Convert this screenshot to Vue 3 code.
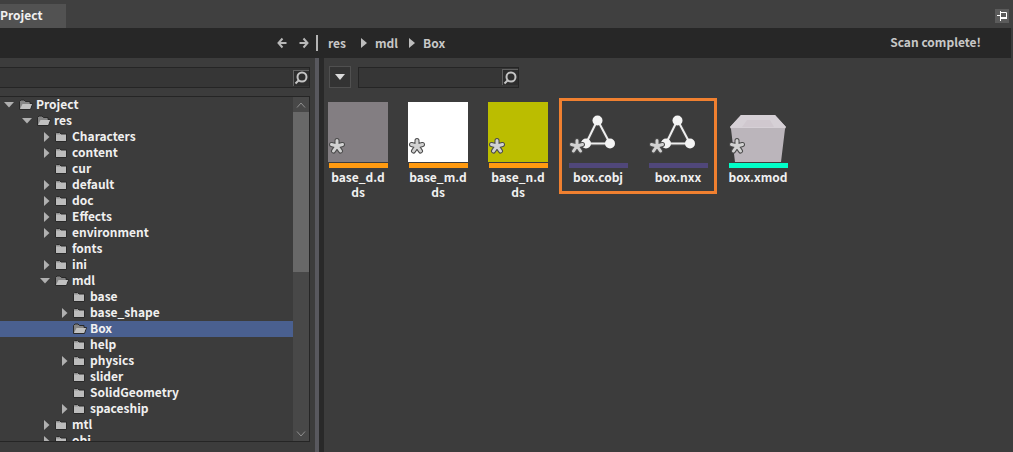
<script setup>
import { ref } from 'vue'

const rows = [
  { name: 'Project', level: 0, state: 'open' },
  { name: 'res', level: 1, state: 'open' },
  { name: 'Characters', level: 2, state: 'closed' },
  { name: 'content', level: 2, state: 'closed' },
  { name: 'cur', level: 2, state: 'leaf' },
  { name: 'default', level: 2, state: 'closed' },
  { name: 'doc', level: 2, state: 'closed' },
  { name: 'Effects', level: 2, state: 'closed' },
  { name: 'environment', level: 2, state: 'closed' },
  { name: 'fonts', level: 2, state: 'leaf' },
  { name: 'ini', level: 2, state: 'closed' },
  { name: 'mdl', level: 2, state: 'open' },
  { name: 'base', level: 3, state: 'leaf' },
  { name: 'base_shape', level: 3, state: 'closed' },
  { name: 'Box', level: 3, state: 'leaf' },
  { name: 'help', level: 3, state: 'leaf' },
  { name: 'physics', level: 3, state: 'closed' },
  { name: 'slider', level: 3, state: 'leaf' },
  { name: 'SolidGeometry', level: 3, state: 'leaf' },
  { name: 'spaceship', level: 3, state: 'closed' },
  { name: 'mtl', level: 2, state: 'closed' },
  { name: 'obj', level: 2, state: 'closed' },
]

const textures = [
  { name: 'base_d.dds', kind: 'texture', swatch: 'grey' },
  { name: 'base_m.dds', kind: 'texture', swatch: 'white' },
  { name: 'base_n.dds', kind: 'texture', swatch: 'olive' },
]
const meshes = [
  { name: 'box.cobj', kind: 'mesh' },
  { name: 'box.nxx', kind: 'mesh' },
]
const models = [{ name: 'box.xmod', kind: 'model' }]
const groups = [
  { id: 'textures', marked: false, files: textures },
  { id: 'meshes', marked: true, files: meshes },
  { id: 'models', marked: false, files: models },
]

const crumbs = ['res', 'mdl', 'Box']
const selected = ref('Box')
const treeQuery = ref('')
const fileQuery = ref('')
</script>

<template>
  <div class="app">
    <header class="tabs">
      <button class="tab" type="button">Project</button>
      <button class="pin" type="button" aria-label="Pin panel">
        <svg width="14" height="14" viewBox="0 0 14 14">
          <path d="M2 6.5H5M5.5 2V12M5 3.5H11.5V8.5" fill="none" stroke="#fff" />
          <path d="M5 9H12" stroke="#fff" stroke-width="2" />
        </svg>
      </button>
    </header>

    <nav class="toolbar">
      <div class="history">
        <button type="button" aria-label="Back">
          <svg width="10" height="12" viewBox="0 0 10 12"><path d="M5.5 1.5L1.5 6L5.5 10.5M1.5 6H9.5" /></svg>
        </button>
        <button type="button" aria-label="Forward">
          <svg width="10" height="12" viewBox="0 0 10 12"><path d="M4.5 1.5L8.5 6L4.5 10.5M8.5 6H0.5" /></svg>
        </button>
        <span class="bar"></span>
      </div>
      <ol class="crumbs">
        <li v-for="(c, i) in crumbs" :key="c">
          <svg v-if="i" width="6" height="10" viewBox="0 0 6 10"><path d="M0 0L6 5L0 10Z" fill="#bdbdbd" /></svg>
          <a href="#">{{ c }}</a>
        </li>
      </ol>
      <span class="status">Scan complete!</span>
    </nav>

    <main class="panes">
      <aside class="side">
        <div class="search">
          <input v-model="treeQuery" type="text" aria-label="Search folders" />
          <button type="button" aria-label="Search folders now">
            <svg width="16" height="16" viewBox="0 0 16 16">
              <circle cx="9" cy="7" r="4.5" fill="none" stroke="#c4c4c4" stroke-width="2" />
              <path d="M6 10L2.5 13.5" stroke="#c4c4c4" stroke-width="2" />
            </svg>
          </button>
        </div>
        <div class="tree">
          <ul class="rows">
            <li v-for="r in rows" :key="r.name">
              <button
                type="button"
                class="row"
                :class="['level-' + r.level, { selected: selected === r.name }]"
                @click="selected = r.name"
              >
                <span class="twist" :class="r.state">
                  <svg v-if="r.state === 'open'" width="10" height="6" viewBox="0 0 10 6"><path d="M0 0H10L5 5.5Z" fill="#b0b0b0" /></svg>
                  <svg v-else-if="r.state === 'closed'" width="6" height="10" viewBox="0 0 6 10"><path d="M0 0L5.5 5L0 10Z" fill="#b0b0b0" /></svg>
                </span>
                <svg class="folder" width="14" height="12" viewBox="0 0 14 12">
                  <template v-if="r.state === 'open' || r.name === 'Box'">
                    <path d="M0.5 10.5V2.5L2 1H5L6.5 2.5H11V4.5H13.5L11.5 10.5Z" fill="#858585" stroke="#292929" />
                    <path d="M3.5 5H13L11 10H1Z" fill="#c0c0c0" />
                  </template>
                  <template v-else>
                    <path d="M0.5 10.5V3L1.5 1.5H4.5L6 3H11.5V10.5Z" fill="#bcbcbc" stroke="#292929" />
                    <path d="M1 3.5L2 2H4.5L5.5 3.5Z" fill="#8d8d8d" />
                  </template>
                </svg>
                <span class="name">{{ r.name }}</span>
              </button>
            </li>
          </ul>
          <div class="scroll">
            <button type="button" aria-label="Scroll up">
              <svg width="10" height="6" viewBox="0 0 10 6"><path d="M1 5.5L5 1L9 5.5" /></svg>
            </button>
            <div class="track"><div class="thumb"></div></div>
            <button type="button" aria-label="Scroll down">
              <svg width="10" height="6" viewBox="0 0 10 6"><path d="M1 0.5L5 5L9 0.5" /></svg>
            </button>
          </div>
        </div>
      </aside>
      <div class="splitter"></div>

      <section class="content">
        <div class="filters">
          <button class="menu" type="button" aria-label="Filter menu">
            <svg width="10" height="6" viewBox="0 0 10 6"><path d="M0 0H10L5 6Z" fill="#dadada" /></svg>
          </button>
          <div class="search small">
            <input v-model="fileQuery" type="text" aria-label="Search files" />
            <button type="button" aria-label="Search files now">
              <svg width="16" height="16" viewBox="0 0 16 16">
                <circle cx="9" cy="7" r="4.5" fill="none" stroke="#c4c4c4" stroke-width="2" />
                <path d="M6 10L2.5 13.5" stroke="#c4c4c4" stroke-width="2" />
              </svg>
            </button>
          </div>
        </div>

        <div class="files">
          <div v-for="g in groups" :key="g.id" class="group" :class="{ marked: g.marked }">
            <figure v-for="f in g.files" :key="f.name" class="file" :class="f.kind">
              <div class="thumbnail" :class="f.swatch">
                <svg v-if="f.kind === 'mesh'" width="60" height="60" viewBox="0 0 60 60">
                  <path d="M29.5 18L18 42H42Z" fill="none" stroke="#474747" stroke-width="4" />
                  <path d="M29.5 18L18 41.5H42Z" fill="none" stroke="#eeeeee" stroke-width="2" />
                  <g fill="#f4f4f4"><circle cx="29.5" cy="18.5" r="5" /><circle cx="18" cy="41.5" r="5" /><circle cx="42" cy="41.5" r="5" /></g>
                </svg>
                <svg v-if="f.kind === 'model'" width="60" height="60" viewBox="0 0 60 60">
                  <path d="M13 13H47L58 25L57 27L53 60H7L3 27L2 25Z" fill="#bbb5bb" />
                  <path d="M13 13H47L58 25L57 26H3L2 25Z" fill="#d6d0d6" />
                  <path d="M19 18H42L46 25H14Z" fill="#d0c8cf" />
                </svg>
                <svg class="star" width="18" height="18" viewBox="0 0 18 18">
                  <g v-for="pass in 2" :key="pass" :stroke="pass === 1 ? '#4c4c4c' : '#d2d2d2'" :stroke-width="pass === 1 ? 5 : 3" stroke-linecap="round">
                    <path d="M9 9V3.5M9 9L14.5 7.5M9 9L12.5 14M9 9L5.5 14M9 9L3.5 7.5" />
                  </g>
                </svg>
              </div>
              <div class="stripe"></div>
              <figcaption>{{ f.name }}</figcaption>
            </figure>
          </div>
        </div>
      </section>
    </main>
  </div>
</template>

<style>
body { margin: 0; background: #3c3c3c; }
</style>

<style scoped>
* { box-sizing: border-box; }
.app {
  height: 100vh;
  display: flex;
  flex-direction: column;
  overflow: hidden;
  background: #3c3c3c;
  color: #f0f0f0;
  font: 700 12px/16px "Noto Sans CJK SC", "Noto Sans", sans-serif;
}
button, input { margin: 0; padding: 0; border: 0; background: none; color: inherit; font: inherit; }
svg { display: block; flex: none; }
.tabs {
  flex: none;
  height: 28px;
  display: flex;
  justify-content: space-between;
  background: #404040;
}
.tab { width: 66px; height: 24px; margin-top: 4px; padding-bottom: 2px; background: #525252; text-align: left; }
.pin { width: 14px; height: 14px; margin: 9px 4px 0 0; background: #5b5b5b; }
.toolbar {
  flex: none;
  height: 30px;
  margin-right: 2px;
  display: flex;
  align-items: center;
  background: #272727;
  color: #c8c8c8;
}
.history { width: 328px; display: flex; align-items: center; justify-content: flex-end; gap: 12px; padding-right: 10px; }
.history path { fill: none; stroke: #b8b8b8; stroke-width: 2; }
.bar { width: 2px; height: 16px; margin-left: -5px; background: #b4b4b4; }
.crumbs { display: flex; margin: 0; padding: 0; list-style: none; gap: 11px; }
.crumbs li { display: flex; align-items: center; gap: 8px; }
.crumbs a { min-width: 22px; color: inherit; text-decoration: none; }
.status { margin-left: auto; margin-right: 30px; padding-bottom: 2px; }
.panes { flex: 1; min-height: 0; display: flex; }
.side { flex: none; width: 315px; padding: 9px 5px 10px 0; display: flex; flex-direction: column; gap: 8px; }
.splitter { flex: none; width: 9px; background: #292929; border-left: 4px solid #58585e; }
.search {
  flex: none;
  height: 21px;
  display: flex;
  align-items: center;
  border: 1px solid #252525;
  background: #363636;
}
.side .search, .tree { border-left: 0; }
.search input { flex: 1; min-width: 0; height: 100%; outline: none; }
.search button { width: 16px; height: 16px; background: #2d2d2d; border-left: 1px solid #626262; border-top: 1px solid #626262; }
.search button svg { margin: -1px; }
.tree { flex: 1; min-height: 0; display: flex; border: 1px solid #252525; border-left: 0; }
.rows { flex: 1; min-width: 0; margin: 0; padding: 0; list-style: none; overflow: hidden; }
.row { width: 100%; height: 16px; display: flex; align-items: center; text-align: left; }
.level-0 { padding-left: 4px; }
.level-1 { padding-left: 22px; }
.level-2 { padding-left: 40px; }
.level-3 { padding-left: 58px; }
.row.selected { background: #4a6090; }
.name { padding-bottom: 2px; }
.twist { width: 10px; margin-right: 5px; display: flex; justify-content: center; }
.twist.closed { justify-content: flex-end; }
.folder { margin-right: 3px; }
.scroll { flex: none; width: 16px; display: flex; flex-direction: column; background: #484848; }
.scroll button { height: 15px; display: flex; align-items: center; justify-content: center; }
.scroll path { fill: none; stroke: #8f8f8f; }
.track { flex: 1; }
.thumb { height: 51%; background: #686868; }
.content { flex: 1; min-width: 0; padding-top: 8px; }
.filters { display: flex; align-items: center; gap: 7px; padding-left: 5px; }
.menu { width: 22px; height: 22px; display: flex; align-items: center; justify-content: center; border: 1px solid #505050; background: #333333; }
.search.small { width: 161px; }
.files { display: flex; flex-wrap: wrap; padding: 14px 0 0 4px; }
.group { display: flex; position: relative; }
.group.marked::before {
  content: "";
  position: absolute;
  top: -4px;
  bottom: 6px;
  left: -9px;
  right: 11px;
  border: 3px solid #f08030;
}
.file { width: 60px; margin: 0 20px 0 0; text-align: center; }
.thumbnail { height: 60px; position: relative; }
.grey { background: #837e82; }
.white { background: #ffffff; }
.olive { background: #bbbd00; }
.star { position: absolute; left: 0; bottom: 7px; }
.stripe { height: 5px; margin: 1px 0 1px 1px; }
.texture .stripe { background: #ff9a10; }
.mesh .stripe { background: #50477a; }
.model .stripe { background: #00ffc8; }
figcaption { line-height: 15px; word-break: break-all; min-height: 31px; }
</style>
